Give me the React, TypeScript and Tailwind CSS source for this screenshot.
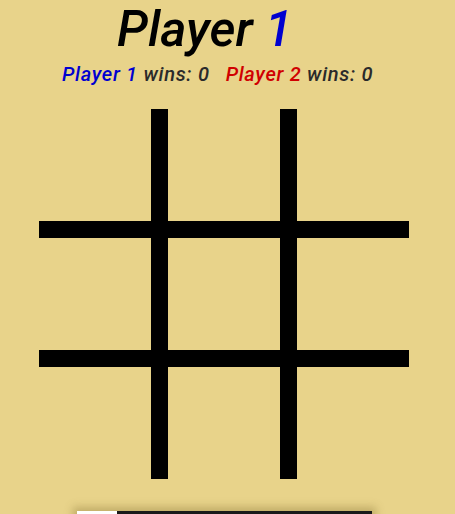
import React from 'react';

const Board: React.FC = () => {
  const cells = Array.from({ length: 9 });
  return (
    <div className="relative ml-[39px] mt-[23px] h-[370px] w-[370px]">
      <div className="grid h-full w-full grid-cols-3 grid-rows-3 gap-[17px]">
        {cells.map((_, i) => (
          <button key={i} className="h-full w-full" aria-label={`cell ${i + 1}`} />
        ))}
      </div>
      {/* grid lines drawn over the cells */}
      <div className="pointer-events-none absolute left-[112px] top-0 h-full w-[17px] bg-black" />
      <div className="pointer-events-none absolute left-[241px] top-0 h-full w-[17px] bg-black" />
      <div className="pointer-events-none absolute left-0 top-[112px] h-[17px] w-full bg-black" />
      <div className="pointer-events-none absolute left-0 top-[241px] h-[17px] w-full bg-black" />
    </div>
  );
};

export default function App() {
  return (
    <div
      className="h-[514px] w-full overflow-hidden bg-[#e8d38a]"
      style={{ fontFamily: 'Roboto, "Liberation Sans", sans-serif' }}
    >
      <h1 className="pl-[117px] text-[50px] font-medium italic leading-[58px] text-black">
        Player <span className="text-[#0000d0]">1</span>
      </h1>
      <div className="mt-[4px] flex pl-[62px] text-[20px] font-medium italic leading-[24px] tracking-[0.7px] text-[#2a2a2a]">
        <span>
          <span className="text-[#0000d0]">Player 1</span> wins: 0
        </span>
        <span className="ml-[16px]">
          <span className="text-[#d00000]">Player 2</span> wins: 0
        </span>
      </div>
      <Board />
      <div className="ml-[77px] mt-[32px] flex h-[40px] w-[295px] shadow-[0_0_8px_4px_rgba(120,100,40,0.35)]">
        <div className="w-[40px] bg-white" />
        <div className="flex-1 bg-[#1a1a1a]" />
      </div>
    </div>
  );
}
